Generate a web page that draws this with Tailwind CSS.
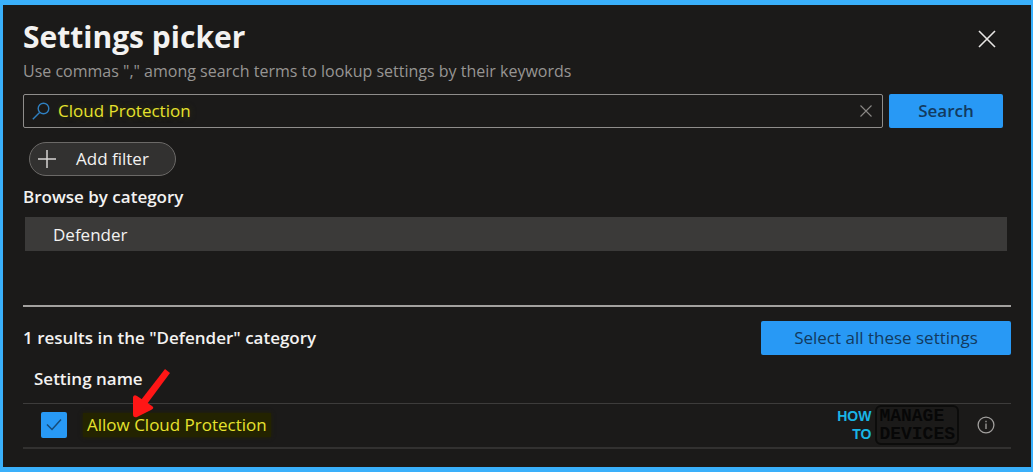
<!DOCTYPE html>
<html lang="en">
<head>
    <meta charset="UTF-8">
    <meta name="viewport" content="width=device-width, initial-scale=1.0">
    <script src="https://cdn.jsdelivr.net/npm/@tailwindcss/browser@4"></script>
    <title>Settings picker</title>
</head>

<body class="bg-[#1b1a19]">
    <main class="min-h-screen border-t-5 border-b-5 border-l-3 border-r-2 border-[#3ab0fb] bg-[#1b1a19] pl-5 pr-5 text-[17px] leading-6 text-[#f3f2f1] font-['Open_Sans',sans-serif]">

        <header class="flex items-start justify-between pt-3 pr-[14px]">
            <div>
                <h1 class="text-[30px] leading-10 font-bold">Settings picker</h1>
                <p class="text-base leading-7 text-[#979593]">Use commas "," among search terms to lookup settings by their keywords</p>
            </div>
            <button type="button" aria-label="Close" class="mt-3">
                <svg class="size-5" viewBox="0 0 20 20" fill="none" stroke="#e8e6e4" stroke-width="1.6"><path d="M2 2l16 16M18 2L2 18"/></svg>
            </button>
        </header>

        <form class="mt-[9px] flex gap-[6px] pr-2">
            <div class="flex h-[34px] grow items-center rounded-xs border border-[#8f8d8b] px-2">
                <svg class="size-[18px] shrink-0" viewBox="0 0 18 18" fill="none" stroke="#2f7fc0" stroke-width="1.4"><circle cx="11.5" cy="6.5" r="5.3"/><path d="M7.6 10.4L.8 17.2"/></svg>
                <input type="text" aria-label="Search settings" value="Cloud Protection" class="ml-2 min-w-0 grow text-[#e6e22e] outline-none text-shadow-[0_0_6px_#3c3c00]">
                <button type="button" aria-label="Clear search">
                    <svg class="size-4" viewBox="0 0 16 16" fill="none" stroke="#8a8886" stroke-width="1.1"><path d="M2.5 2.5l11 11M13.5 2.5l-11 11"/></svg>
                </button>
            </div>
            <button type="submit" class="h-[34px] w-[114px] rounded-xs bg-[#2899f5] font-semibold text-[#123a60]">Search</button>
        </form>

        <button type="button" class="mt-[14px] ml-[6px] flex h-[34px] items-center gap-5 rounded-full border border-[#6b6967] bg-[#323130] pl-2 pr-[26px]">
            <svg class="size-[18px]" viewBox="0 0 18 18" fill="none" stroke="#d6d4d2" stroke-width="1.5"><path d="M9 0v18M0 9h18"/></svg>
            Add filter
        </button>

        <h2 class="mt-[7px] leading-7 font-semibold">Browse by category</h2>
        <ul class="mt-[6px] ml-[2px] mr-1">
            <li class="h-[34px] bg-[#3b3a39]"><a href="#" class="block pl-7 leading-9">Defender</a></li>
        </ul>

        <section class="mt-[54px] border-t-2 border-[#a3a19f] pt-[14px]">
            <div class="flex items-center justify-between">
                <h2 class="font-semibold">1 results in the "Defender" category</h2>
                <button type="button" class="h-[34px] w-[250px] rounded-xs bg-[#2899f5] font-medium text-[#123a60]">Select all these settings</button>
            </div>

            <table class="mt-2 w-full">
                <thead>
                    <tr class="h-10 border-b border-[#3d3c3b]">
                        <th colspan="2" class="pl-[11px] text-left align-top leading-8 font-semibold">Setting name</th>
                    </tr>
                </thead>
                <tbody>
                    <tr class="h-[45px] border-b-2 border-[#323130]">
                        <td>
                            <div class="flex items-center pl-[18px]">
                                <span class="relative size-[26px]">
                                    <input type="checkbox" id="cloud" checked class="block size-[26px] appearance-none rounded-xs bg-[#2899f5]">
                                    <svg class="pointer-events-none absolute inset-0" viewBox="0 0 26 26" fill="none" stroke="#164b78" stroke-width="1.5"><path d="M6 12.5l5 5L20 7.5"/></svg>
                                </span>
                                <label for="cloud" class="ml-4 bg-[#232300] px-1 text-[#e6e22e] shadow-[0_0_4px_#232300]">Allow Cloud Protection</label>
                            </div>
                        </td>
                        <td>
                            <div class="flex items-center justify-end pr-4">
                                <div class="mr-[18px] flex items-center gap-1 font-bold">
                                    <div class="text-right text-sm leading-[18px] text-[#19b5e5] font-['Liberation_Sans',sans-serif]">HOW<br>TO</div>
                                    <div class="rounded-md border-2 border-[#0c0c0b] px-[2px] text-lg leading-[18px] text-[#070707] font-['Liberation_Mono',monospace]">MANAGE<br>DEVICES</div>
                                </div>
                                <button type="button" aria-label="Details">
                                    <svg class="size-[18px]" viewBox="0 0 18 18" fill="none" stroke="#a19f9d" stroke-width="1.3"><circle cx="9" cy="9" r="7.9"/><path d="M9 7.5v5.5M9 4.8v1.4"/></svg>
                                </button>
                            </div>
                        </td>
                    </tr>
                </tbody>
            </table>
        </section>

        <!-- arrow pointing at the setting -->
        <svg class="pointer-events-none absolute top-[367px] left-[131px] h-[52px] w-10" viewBox="0 0 40 52" fill="#ff1616"><path d="M34 2l5 4L16 37l-6-4z"/><path d="M2 30Q3 27 6 29L21 39Q24 41 20 43L6 50Q2 51 2 47Z"/></svg>
    </main>
</body>

</html>
